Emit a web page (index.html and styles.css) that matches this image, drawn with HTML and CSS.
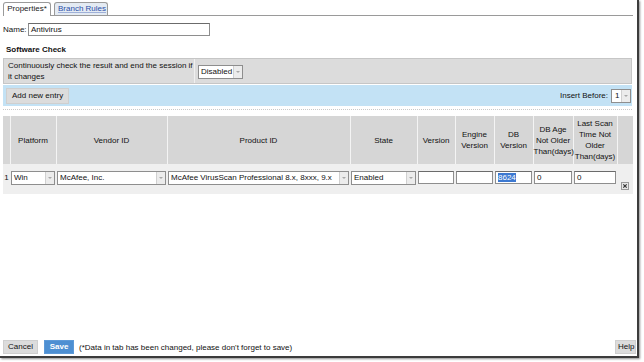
FILE: index.html
```html
<!DOCTYPE html>
<html>
<head>
<meta charset="utf-8">
<link rel="stylesheet" href="styles.css">
</head>
<body>
<div class="frame">
  <div class="tabs">
    <span class="tab active">Properties*</span>
    <span class="tab other">Branch Rules</span>
  </div>
  <div class="name-row">
    <span class="label">Name:</span>
    <span class="input name-input">Antivirus</span>
  </div>
  <div class="heading">Software Check</div>
  <div class="check-box">
    <div class="check-text">Continuously check the result and end the session if<br>it changes</div>
    <div class="check-sel"><span class="select sel-disabled"><span class="sel-val">Disabled</span><span class="arrow"></span></span></div>
  </div>
  <div class="toolbar">
    <span class="btn add">Add new entry</span>
    <span class="insert">Insert Before:</span>
    <span class="select sel-one"><span class="sel-val">1</span><span class="arrow"></span></span>
  </div>
  <div class="dotted"></div>
  <table class="grid">
    <colgroup>
      <col class="c-idx"><col class="c-plat"><col class="c-vend"><col class="c-prod"><col class="c-state"><col class="c-ver"><col class="c-eng"><col class="c-db"><col class="c-age"><col class="c-scan"><col class="c-del">
    </colgroup>
    <thead>
      <tr>
        <th></th>
        <th>Platform</th>
        <th>Vendor ID</th>
        <th>Product ID</th>
        <th>State</th>
        <th>Version</th>
        <th>Engine<br>Version</th>
        <th>DB<br>Version</th>
        <th>DB Age<br>Not Older<br>Than(days)</th>
        <th>Last Scan<br>Time Not<br>Older<br>Than(days)</th>
        <th></th>
      </tr>
    </thead>
    <tbody>
      <tr>
        <td class="idx">1</td>
        <td><span class="select"><span class="sel-val">Win</span><span class="arrow"></span></span></td>
        <td><span class="select"><span class="sel-val">McAfee, Inc.</span><span class="arrow"></span></span></td>
        <td><span class="select"><span class="sel-val">McAfee VirusScan Professional 8.x, 8xxx, 9.x</span><span class="arrow"></span></span></td>
        <td><span class="select"><span class="sel-val">Enabled</span><span class="arrow"></span></span></td>
        <td><span class="input cell-input"></span></td>
        <td><span class="input cell-input"></span></td>
        <td><span class="input cell-input"><span class="selected">8624</span></span></td>
        <td><span class="input cell-input">0</span></td>
        <td><span class="input cell-input">0</span></td>
        <td class="del-cell"><span class="del">
          <svg width="8" height="8" viewBox="0 0 8 8"><rect x="0.5" y="0.5" width="7" height="7" fill="#e8e8e8" stroke="#9a9a9a"/><path d="M2.3 2.3L5.7 5.7M5.7 2.3L2.3 5.7" stroke="#333" stroke-width="1.2"/></svg>
        </span></td>
      </tr>
    </tbody>
  </table>
  <div class="fill"></div>
  <div class="footer">
    <span class="btn cancel">Cancel</span>
    <span class="btn save">Save</span>
    <span class="note">(*Data in tab has been changed, please don't forget to save)</span>
    <span class="btn help">Help</span>
  </div>
</div>
</body>
</html>
```

FILE: styles.css
```css
html, body {
  margin: 0;
  padding: 0;
  background: #ffffff;
}
body {
  font-family: "Liberation Sans", Arial, sans-serif;
  font-size: 8px;
  color: #111;
  width: 644px;
  height: 362px;
  overflow: hidden;
}
.frame {
  box-sizing: border-box;
  width: 639px;
  height: 358px;
  border-right: 2px solid #3c3c3c;
  border-bottom: 2px solid #3c3c3c;
  box-shadow: 1px 1px 2px rgba(0,0,0,0.45);
  display: flex;
  flex-direction: column;
  padding: 2px 4px 0 3px;
  background: #fff;
  white-space: nowrap;
}
.tabs {
  display: flex;
  gap: 3px;
  height: 13px;
  border-bottom: 1px solid #9a9a9a;
  width: 630px;
  align-items: flex-end;
}
.tab {
  box-sizing: border-box;
  height: 13px;
  line-height: 12px;
  padding: 0 3px;
  border: 1px solid #9a9a9a;
  border-bottom: none;
  border-radius: 3px 3px 0 0;
  white-space: nowrap;
  text-align: center;
}
.tab.active {
  background: #fff;
  width: 48px;
  color: #222;
  height: 14px;
  margin-bottom: -1px;
}
.tab.other {
  background: #e4ebf3;
  color: #2a4ea8;
  width: 54px;
  text-decoration: underline;
  text-decoration-color: #9fb0d8;
}
.name-row {
  display: flex;
  align-items: center;
  margin-top: 6px;
  height: 14px;
}
.label {
  width: 25px;
}
.input {
  box-sizing: border-box;
  display: inline-block;
  background: #fff;
  border: 1px solid #8e8e8e;
  border-top-color: #6b6b6b;
  height: 13px;
  line-height: 11px;
  padding: 0 2px;
  white-space: nowrap;
  overflow: hidden;
}
.name-input {
  width: 182px;
}
.heading {
  font-weight: bold;
  margin-top: 8px;
  margin-left: 3px;
  height: 11px;
  line-height: 11px;
}
.check-box {
  margin-top: 3px;
  width: 629px;
  box-sizing: border-box;
  height: 26px;
  display: flex;
  background: #dcdcdc;
  border: 1px solid #c6c6c6;
}
.check-text {
  width: 186px;
  padding: 1px 0 0 4px;
  line-height: 11px;
  border-right: 1px solid #f0f0f0;
}
.check-sel {
  padding: 6px 0 0 3px;
}
.select {
  box-sizing: border-box;
  display: flex;
  align-items: stretch;
  background: #fff;
  border: 1px solid #8e8e8e;
  height: 14px;
  line-height: 12px;
}
.sel-val {
  flex: 1;
  padding-left: 2px;
  white-space: nowrap;
  overflow: hidden;
}
.arrow {
  width: 8px;
  background: #ececec;
  border-left: 1px solid #d0d0d0;
  position: relative;
}
.arrow::after {
  content: "";
  position: absolute;
  left: 2px;
  top: 5px;
  border-left: 2px solid transparent;
  border-right: 2px solid transparent;
  border-top: 2px solid #a8a8a8;
}
.sel-disabled {
  width: 45px;
}
.toolbar {
  width: 629px;
  box-sizing: border-box;
  height: 21px;
  margin-top: 1px;
  background: #c3e2f5;
  display: flex;
  align-items: center;
  padding: 0 1px 0 3px;
}
.btn {
  box-sizing: border-box;
  display: inline-block;
  height: 14px;
  line-height: 12px;
  padding: 0 5px;
  background: #dcdcdc;
  border: 1px solid #cfcfcf;
  white-space: nowrap;
}
.add {
  width: 63px;
  height: 16px;
  line-height: 14px;
  padding: 0 0 0 5px;
}
.insert {
  margin-left: auto;
  margin-right: 3px;
}
.sel-one {
  width: 20px;
}
.sel-one .sel-val {
  padding-left: 3px;
}
.dotted {
  width: 629px;
  border-top: 1px dotted #c8c8c8;
  margin-top: 3px;
}
.grid {
  margin-top: 6px;
  width: 630px;
  table-layout: fixed;
  border-collapse: collapse;
}
.c-idx { width: 7px; }
.c-plat { width: 46px; }
.c-vend { width: 111px; }
.c-prod { width: 183px; }
.c-state { width: 67px; }
.c-ver { width: 38px; }
.c-eng { width: 39px; }
.c-db { width: 39px; }
.c-age { width: 40px; }
.c-scan { width: 44px; }
.c-del { width: 16px; }
.grid th {
  background: #d6d6d6;
  font-weight: normal;
  height: 48px;
  line-height: 11px;
  padding: 0;
  border-left: 1px solid #f4f4f4;
  text-align: center;
  vertical-align: middle;
}
.grid th:first-child {
  border-left: none;
}
.grid td {
  background: #efefef;
  padding: 7px 1px 8px 1px;
  vertical-align: top;
}
.grid td.idx {
  padding-left: 0;
  padding-right: 0;
  text-align: center;
  line-height: 14px;
}
.cell-input {
  width: 100%;
  height: 13px;
}
.selected {
  background: #3c78d0;
  color: #fff;
}
.del-cell {
  position: relative;
}
.del {
  position: absolute;
  left: 4px;
  top: 18px;
  line-height: 0;
}
.fill {
  flex: 1;
}
.footer {
  display: flex;
  align-items: center;
  height: 14px;
  margin-bottom: 2px;
  width: 633px;
}
.cancel {
  width: 35px;
  padding: 0 4px;
}
.save {
  margin-left: 6px;
  width: 30px;
  background: #4d8fd2;
  border-color: #5d9ad8;
  color: #fff;
  font-weight: bold;
  text-align: center;
  padding: 0;
}
.note {
  margin-left: 5px;
}
.help {
  margin-left: auto;
  width: 21px;
  padding: 0 2px;
}
```
